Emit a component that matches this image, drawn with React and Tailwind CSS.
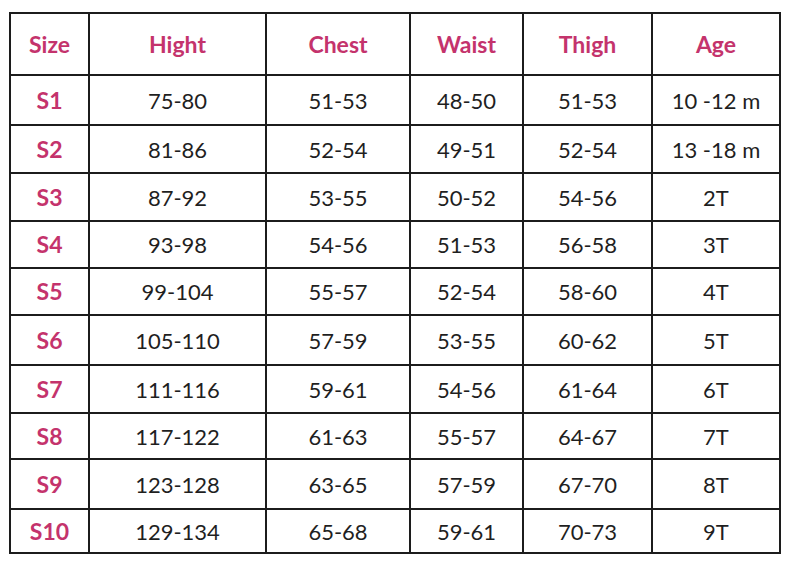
import React from "react";

const headers = ["Size", "Hight", "Chest", "Waist", "Thigh", "Age"];
const rows = [
  ["S1", "75-80", "51-53", "48-50", "51-53", "10 -12 m"],
  ["S2", "81-86", "52-54", "49-51", "52-54", "13 -18 m"],
  ["S3", "87-92", "53-55", "50-52", "54-56", "2T"],
  ["S4", "93-98", "54-56", "51-53", "56-58", "3T"],
  ["S5", "99-104", "55-57", "52-54", "58-60", "4T"],
  ["S6", "105-110", "57-59", "53-55", "60-62", "5T"],
  ["S7", "111-116", "59-61", "54-56", "61-64", "6T"],
  ["S8", "117-122", "61-63", "55-57", "64-67", "7T"],
  ["S9", "123-128", "63-65", "57-59", "67-70", "8T"],
  ["S10", "129-134", "65-68", "59-61", "70-73", "9T"],
];

export default function App() {
  return (
    <div
      className="w-[794px] h-[562px] bg-white overflow-hidden pt-[12px] pl-[9px]"
      style={{ fontFamily: "Lato, 'Open Sans', sans-serif" }}
    >
      <div
        className="grid w-fit border-l-2 border-t-2 border-[#1c1c1c] grid-cols-[79px_177px_144px_113px_129px_128px] grid-rows-[62px_50px_48px_48px_47px_47px_50px_48px_46px_50px_44px]"
      >
        {headers.map((h) => (
          <div
            key={h}
            className="flex items-center justify-center border-r-2 border-b-2 border-[#1c1c1c] text-[23px] font-bold text-[#c4336c]"
          >
            {h}
          </div>
        ))}
        {rows.map((r) =>
          r.map((c, i) => (
            <div
              key={r[0] + i}
              className={
                i === 0
                  ? "flex items-center justify-center border-r-2 border-b-2 border-[#1c1c1c] text-[23px] font-bold text-[#c4336c]"
                  : "flex items-center justify-center border-r-2 border-b-2 border-[#1c1c1c] text-[22px] text-[#1f1f1f]"
              }
            >
              {c}
            </div>
          ))
        )}
      </div>
    </div>
  );
}
